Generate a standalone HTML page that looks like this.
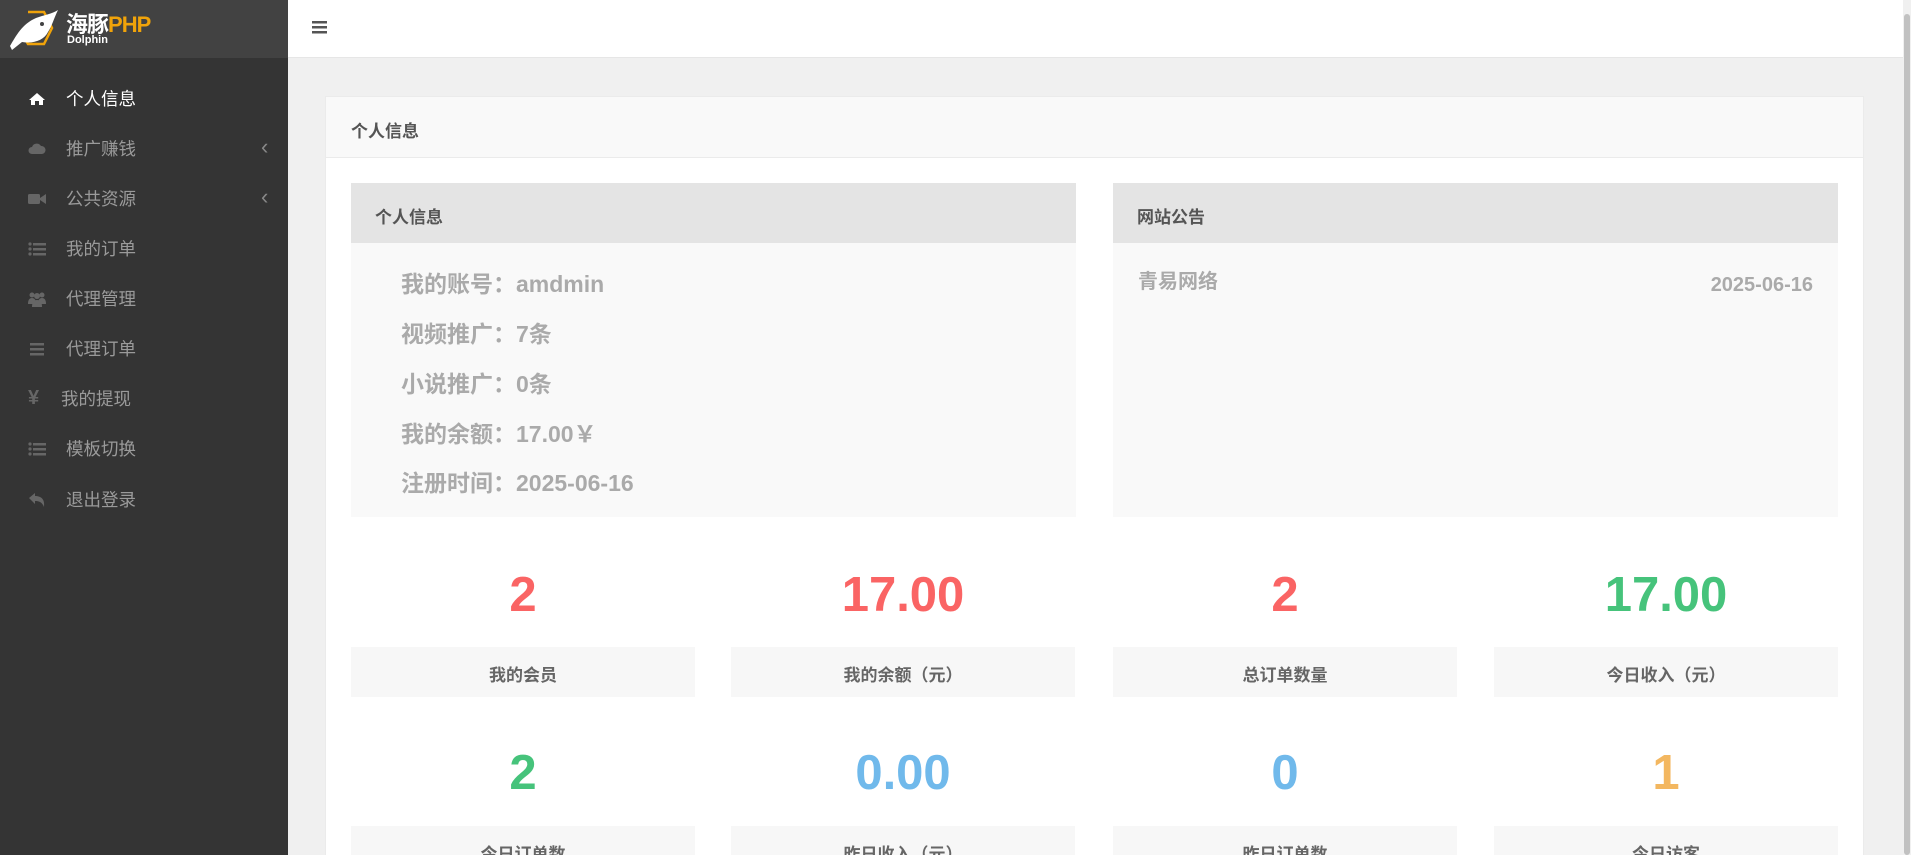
<!DOCTYPE html>
<html><head><meta charset="utf-8"><style>
*{margin:0;padding:0;box-sizing:border-box}
html,body{width:1911px;height:855px;overflow:hidden}
body{background:#f0f0f0;font-family:"Liberation Sans","Noto Sans CJK SC",sans-serif;position:relative}
.side{position:absolute;left:0;top:0;width:288px;height:855px;background:#343434}
.logo{height:58px;background:#424242;position:relative}
.menu{position:absolute;left:0;width:288px;height:50px;color:#9a9a9a;font-size:17.5px}
.menu .ic{position:absolute;left:28px;top:16px;width:18px;height:18px}
.menu .t{position:absolute;left:66px;top:12px}
.menu .ch{position:absolute;left:261px;top:12px;font-size:22px;line-height:22px;color:#888}
.top{position:absolute;left:288px;top:0;right:8px;height:58px;background:#fff;border-bottom:1px solid #e6e6e6}
.scroll{position:absolute;right:0;top:0;width:8px;height:855px;background:#f0f0f0}
.scroll div{position:absolute;left:1px;top:14px;width:6px;height:841px;background:#c1c1c1;border-radius:3px}
.panel{position:absolute;left:325px;top:96px;width:1539px;height:759px;background:#fff;border:1px solid #ebebeb;border-bottom:0}
.ph{height:61px;background:#f9f9f9;border-bottom:1px solid #ebebeb;font-size:17px;font-weight:bold;color:#555;padding:20px 0 0 25px}
.box{position:absolute;top:183px;width:725px;height:334px;background:#f9f9f9}
.bh{height:60px;background:#e4e4e4;font-size:17px;font-weight:bold;color:#555;padding:20px 0 0 24px}
.line{position:absolute;left:50px;font-size:23px;font-weight:bold;color:#aaa}
.num{position:absolute;width:344px;text-align:center;font-size:49px;font-weight:bold}
.lab{position:absolute;width:344px;height:50px;background:#f7f7f7;text-align:center;font-size:17px;font-weight:bold;color:#666;padding-top:14px;overflow:hidden}
.ann{position:absolute;top:88px;font-size:20px;line-height:28px;height:28px;font-weight:bold;color:#aaa}
</style></head><body>
<div class="side">
 <div class="logo">
  <svg style="position:absolute;left:8px;top:6px" width="52" height="46" viewBox="0 0 52 46">
   <path d="M20 6 L36 6 L44 22 L36 38 L20 38 L14 28" fill="none" stroke="#f0a30a" stroke-width="2.5"/>
   <path d="M2 40 C8 30 14 18 28 12 C36 9 44 8 50 4 C46 12 44 20 40 26 C36 34 26 38 14 36 L4 44 Z" fill="#fff"/>
   <circle cx="34" cy="18" r="2" fill="#424242"/>
  </svg>
  <div style="position:absolute;left:66px;top:7px;font-size:22px;font-weight:bold;color:#fff;letter-spacing:-1px">海豚<span style="color:#f0a30a">PHP</span></div>
  <div style="position:absolute;left:67px;top:34px;font-size:11px;color:#fff;font-weight:bold">Dolphin</div>
 </div>
 <div class="menu" style="top:74px;color:#fff"><svg class="ic" viewBox="0 0 18 18"><path d="M9 3 L1 10 L3 10 L3 15 L7 15 L7 11 L11 11 L11 15 L15 15 L15 10 L17 10 Z" fill="#fff"/></svg><span class="t">个人信息</span></div>
 <div class="menu" style="top:124px"><svg class="ic" viewBox="0 0 18 18"><path d="M4 14 A3.5 3.5 0 0 1 4 7 A5 5 0 0 1 13 6 A4 4 0 0 1 14 14 Z" fill="#666"/></svg><span class="t">推广赚钱</span><span class="ch">‹</span></div>
 <div class="menu" style="top:174px"><svg class="ic" viewBox="0 0 18 18"><rect x="0" y="4" width="12" height="10" rx="1.5" fill="#666"/><path d="M12 8 L18 4 L18 14 L12 10Z" fill="#666"/></svg><span class="t">公共资源</span><span class="ch">‹</span></div>
 <div class="menu" style="top:224px"><svg class="ic" viewBox="0 0 18 18" fill="#666"><circle cx="2" cy="4" r="1.6"/><circle cx="2" cy="9" r="1.6"/><circle cx="2" cy="14" r="1.6"/><rect x="5" y="3" width="13" height="2.5"/><rect x="5" y="8" width="13" height="2.5"/><rect x="5" y="13" width="13" height="2.5"/></svg><span class="t">我的订单</span></div>
 <div class="menu" style="top:274px"><svg class="ic" viewBox="0 0 18 18" fill="#666"><circle cx="4" cy="5" r="2.5"/><circle cx="14" cy="5" r="2.5"/><circle cx="9" cy="6" r="3"/><path d="M0 14 Q0 8 4 8 Q8 8 8 14Z M10 14 Q10 8 14 8 Q18 8 18 14Z M4 17 Q4 10 9 10 Q14 10 14 17Z"/></svg><span class="t">代理管理</span></div>
 <div class="menu" style="top:324px"><svg class="ic" viewBox="0 0 18 18" fill="#666"><rect x="2" y="3" width="14" height="2.5"/><rect x="2" y="8" width="14" height="2.5"/><rect x="2" y="13" width="14" height="2.5"/></svg><span class="t">代理订单</span></div>
 <div class="menu" style="top:374px"><span style="position:absolute;left:28px;top:13px;font-weight:bold;color:#666;font-size:20px">¥</span><span class="t" style="left:61px">我的提现</span></div>
 <div class="menu" style="top:424px"><svg class="ic" viewBox="0 0 18 18" fill="#666"><circle cx="2" cy="4" r="1.6"/><circle cx="2" cy="9" r="1.6"/><circle cx="2" cy="14" r="1.6"/><rect x="5" y="3" width="13" height="2.5"/><rect x="5" y="8" width="13" height="2.5"/><rect x="5" y="13" width="13" height="2.5"/></svg><span class="t">模板切换</span></div>
 <div class="menu" style="top:475px"><svg class="ic" viewBox="0 0 18 18"><path d="M1 7 L7 2 L7 5 C13 5 17 8 16 16 C14 11 11 10 7 10 L7 13 Z" fill="#666"/></svg><span class="t">退出登录</span></div>
</div>
<div class="top"><svg style="position:absolute;left:24px;top:21px" width="15" height="13" viewBox="0 0 15 13" fill="#555"><rect y="0" width="15" height="2.5"/><rect y="5" width="15" height="2.5"/><rect y="10" width="15" height="2.5"/></svg></div>
<div class="scroll"><div></div></div>
<div class="panel">
 <div class="ph">个人信息</div>
</div>
<div class="box" style="left:351px">
 <div class="bh">个人信息</div>
 <div class="line" style="top:82px">我的账号：amdmin</div>
 <div class="line" style="top:132px">视频推广：7条</div>
 <div class="line" style="top:182px">小说推广：0条</div>
 <div class="line" style="top:232px">我的余额：17.00￥</div>
 <div class="line" style="top:281px">注册时间：2025-06-16</div>
</div>
<div class="box" style="left:1113px">
 <div class="bh">网站公告</div>
 <div class="ann" style="left:25px;top:85px">青易网络</div>
 <div class="ann" style="right:25px;top:88px">2025-06-16</div>
</div>
<div class="num" style="left:351px;top:567px;color:#fa6464">2</div>
<div class="num" style="left:731px;top:567px;color:#fa6464">17.00</div>
<div class="num" style="left:1113px;top:567px;color:#fa6464">2</div>
<div class="num" style="left:1494px;top:567px;color:#46c37b">17.00</div>
<div class="lab" style="left:351px;top:647px">我的会员</div>
<div class="lab" style="left:731px;top:647px">我的余额（元）</div>
<div class="lab" style="left:1113px;top:647px">总订单数量</div>
<div class="lab" style="left:1494px;top:647px">今日收入（元）</div>
<div class="num" style="left:351px;top:745px;color:#46c37b">2</div>
<div class="num" style="left:731px;top:745px;color:#70b9eb">0.00</div>
<div class="num" style="left:1113px;top:745px;color:#70b9eb">0</div>
<div class="num" style="left:1494px;top:745px;color:#f3b760">1</div>
<div class="lab" style="left:351px;top:826px;height:29px">今日订单数</div>
<div class="lab" style="left:731px;top:826px;height:29px">昨日收入（元）</div>
<div class="lab" style="left:1113px;top:826px;height:29px">昨日订单数</div>
<div class="lab" style="left:1494px;top:826px;height:29px">今日访客</div>
</body></html>
